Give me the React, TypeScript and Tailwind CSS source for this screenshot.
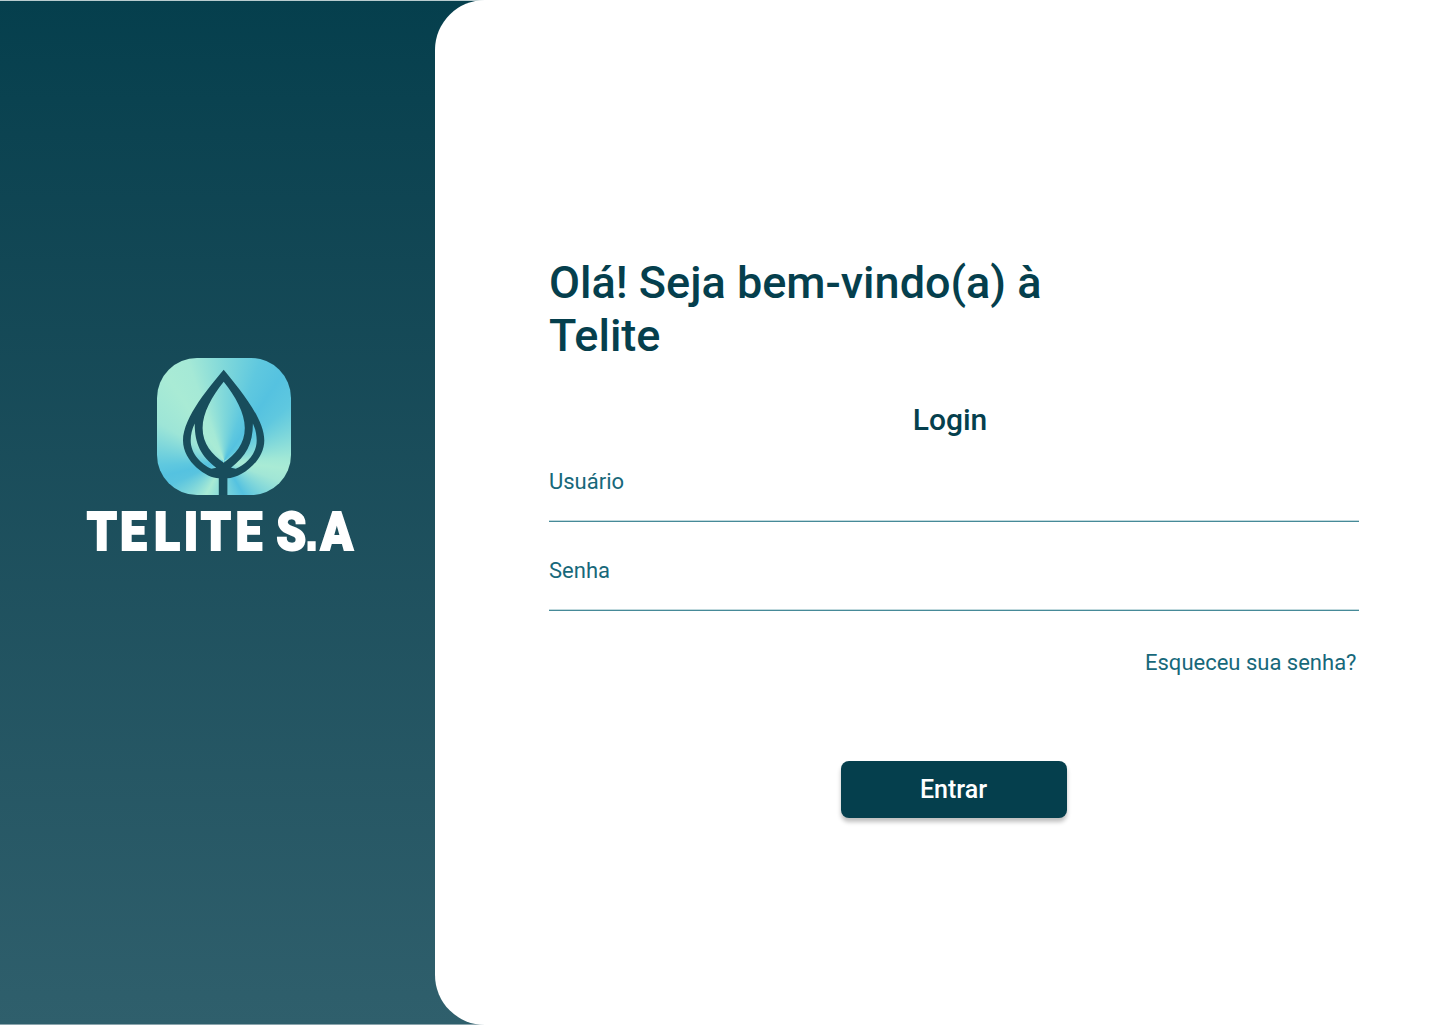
function LogoMark() {
  return (
    <div className="ml-[157px] h-[137px] w-[133.5px] overflow-hidden rounded-[40px] bg-[conic-gradient(from_0deg_at_50%_75%,#80d8da_0deg,#5fc8df_20deg,#55c2e0_34deg,#5fc8df_50deg,#a1e8d6_88deg,#a9ebd5_97deg,#a1e6d6_110deg,#55c2e0_150deg,#a9ebd5_208deg,#5ac4df_246deg,#55c2e0_256deg,#5fc8df_266deg,#9de5d7_300deg,#a9ebd5_326deg,#a5e9d6_340deg,#80d8da_360deg)]">
      <svg viewBox="157 358 133.5 137" className="h-full w-full" aria-hidden="true">
        <path
          fill="#184d5c"
          fillRule="evenodd"
          d="M223.7 369.7C236 385 264.3 417 264.3 440.5C264.3 462 240 478.3 227.4 478.3V496H218.8V478.3C207 478.3 183 462 183 440.5C183 417 211 385 223.7 369.7ZM223.7 381.7C212 396 202.6 413 202.6 428C202.6 444 212 454.5 223.7 462.7C235.4 454.5 244.8 444 244.8 428C244.8 413 235.4 396 223.7 381.7ZM194.7 423.5C192 429 190.7 435 190.7 440.5C190.7 454 201.5 464.5 211.5 468.8L216.2 467.8C201 456 194.7 444 194.7 423.5ZM252.9 423.5C255.5 429 256.7 435 256.7 440.5C256.7 454 246 464.5 235.7 468.8L231 467.8C246 456 252.9 444 252.9 423.5Z"
        />
      </svg>
    </div>
  );
}

function Wordmark() {
  return (
    <svg width="280" height="80" viewBox="82 495 280 80" className="ml-[82px] overflow-visible" role="img" aria-label="TELITE S.A">
      <text
        transform="scale(0.88 1)"
        x="98.5 136.4 174.9 208.9 228 267.5 314 347 364.3"
        y="550"
        fill="#fff"
        stroke="#fff"
        strokeWidth="1.8"
        fontFamily="Roboto, sans-serif"
        fontWeight="900"
        fontSize="54.5"
      >
        TELITES
        <tspan fontFamily="Liberation Sans, sans-serif" fontWeight="700" fontSize="52">.</tspan>
        A
      </text>
    </svg>
  );
}

function Field({ label, type }: { label: string; type: string }) {
  return (
    <label className="flex h-[89px] flex-col text-[22px] leading-[26px] text-[#17687a]">
      <span>{label}</span>
      <input
        type={type}
        className="h-[26px] w-full border-b border-[#c0d9dd] bg-transparent outline-none"
      />
      <span className="h-px w-full bg-[#468a98]" />
    </label>
  );
}

export default function App() {
  return (
    <div className="flex h-[1025px] w-[1440px] overflow-hidden bg-linear-to-b from-[#053f4d] to-[#2f5f6c] font-['Roboto',sans-serif] shadow-[inset_0_1px_0_#b9cccf,inset_0_-1px_0_#8ba5ad]">
      <aside className="w-[435px] shrink-0 pt-[358px]">
        <LogoMark />
        <Wordmark />
      </aside>
      <main className="flex-1 rounded-l-[50px] bg-white pl-[114px] pt-[255.5px]">
        <div className="flex w-[810px] flex-col">
          <h1 className="w-[540px] text-[45px] font-medium leading-[53px] text-[#053f4d]">
            Olá! Seja bem-vindo(a) à Telite
          </h1>
          <h2 className="mt-[40.5px] pr-[8px] text-center text-[30px] font-medium leading-[35px] text-[#053f4d]">
            Login
          </h2>
          <form className="mt-[32px] flex flex-col">
            <Field label="Usuário" type="text" />
            <Field label="Senha" type="password" />
            <a href="#" className="mt-[3px] self-end pr-[2.5px] text-[22px] leading-[26px] text-[#17687a]">
              Esqueceu sua senha?
            </a>
            <button
              type="button"
              className="mt-[85px] h-[57px] w-[226px] self-center rounded-lg bg-[#053f4d] pr-px text-[25px] font-medium leading-[57px] text-white shadow-[0_4px_4px_rgba(0,0,0,0.25)]"
            >
              Entrar
            </button>
          </form>
        </div>
      </main>
    </div>
  );
}
